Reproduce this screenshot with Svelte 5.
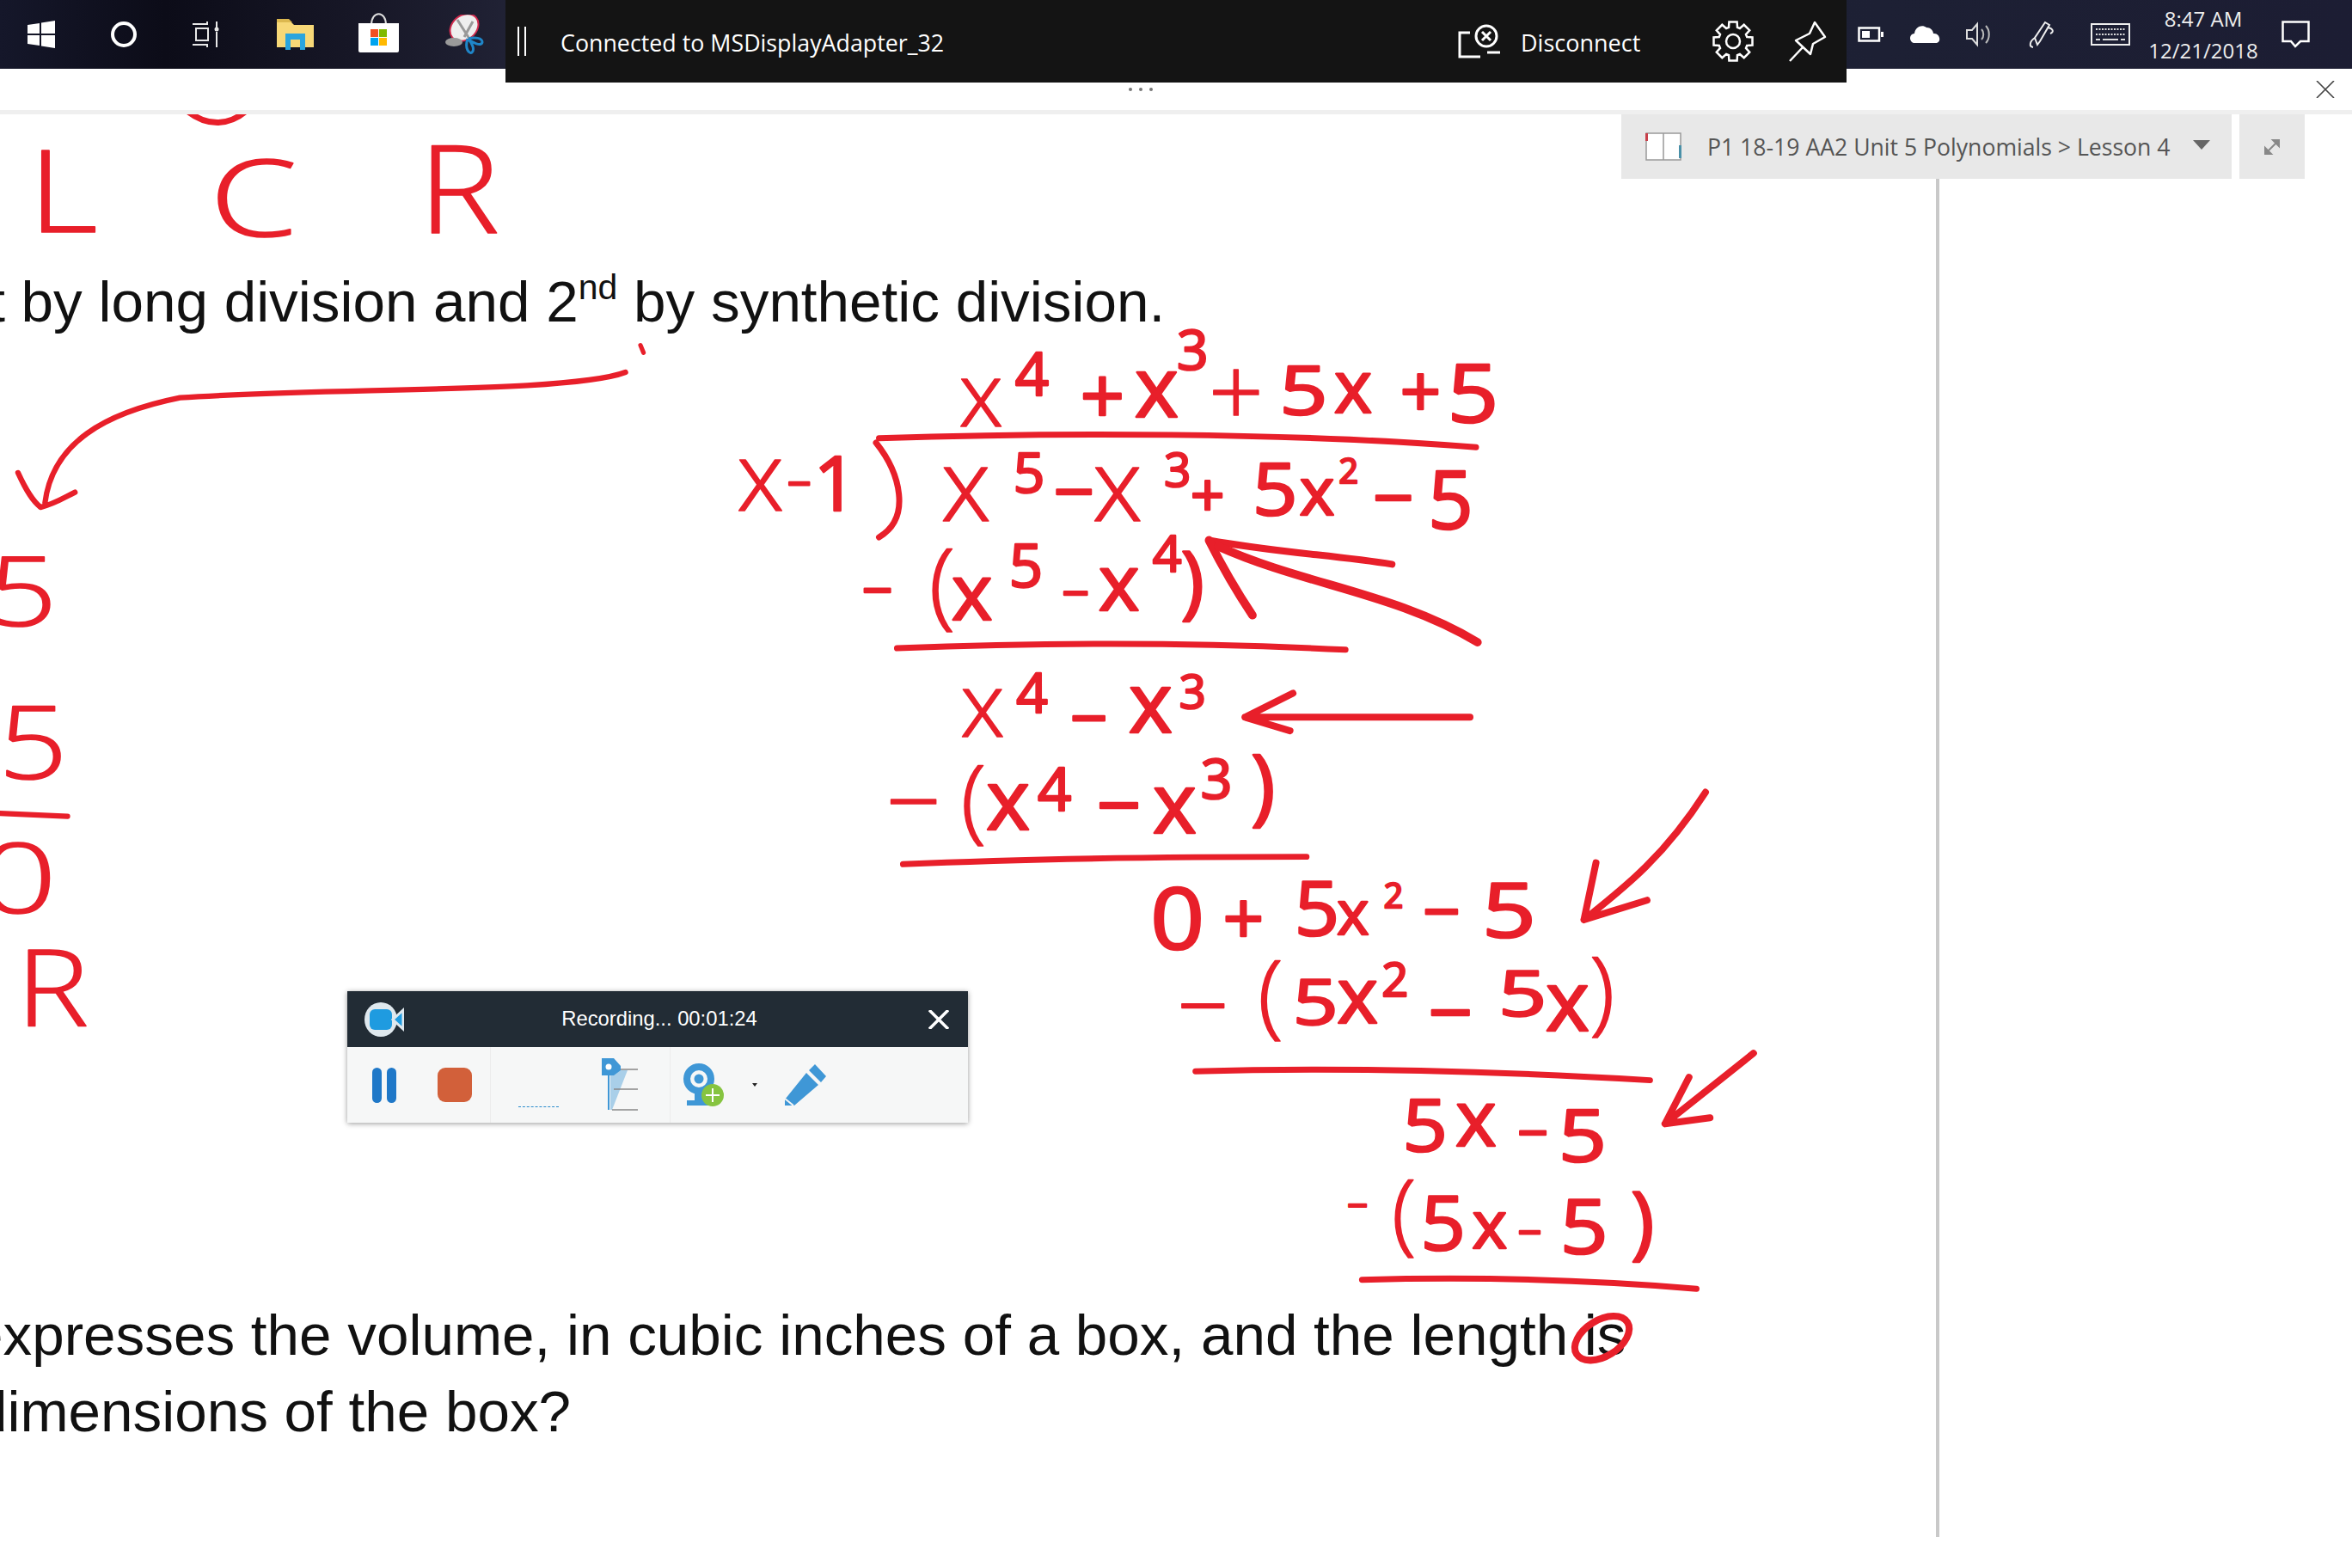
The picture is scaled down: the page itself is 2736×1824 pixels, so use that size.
<script>
  // handwritten ink, placed on the page in 1568x1045 units: [char, centre x, centre y, size, stretched width]
  const rows = [
    ["x",654,268,32],["4",688,249,28],["+",735,265,26],["x",771,263,30],["3",795,233,26],["+",824,263,32],["5",869,260,32,32],["x",902,262,26],["+",947,262,24],["5",982,262,38,34],
    ["x",507,323,34],["−",533,323,14],["1",557,322,36],
    ["x",644,329,36],["5",686,315,26],["−",716,329,24],["x",745,329,36],["3",785,313,22],["+",805,331,20],["5",850,326,34,30],["x",878,331,24],["2",899,314,16],["−",929,333,24],["5",967,333,38,30],
    ["−",585,394,18],["(",628,392,60],["x",648,399,28],["5",684,377,28],["−",717,396,16],["x",746,393,28],["4",778,369,24],[")",795,390,50],
    ["x",655,475,32],["4",688,462,26],["−",726,480,22],["x",767,473,30],["3",795,461,22],
    ["−",609,536,32],["(",649,536,58],["x",672,538,30],["4",703,526,28],["−",746,538,26],["x",783,540,30],["3",811,519,26],[")",842,527,52],
    ["0",785,612,40,36],["+",829,613,24],["5",878,605,36,30],["x",902,612,22],["2",929,597,16],["−",961,609,22],["5",1006,606,36,36],
    ["−",802,672,30],["(",847,666,58],["5",877,668,30,30],["x",905,668,28],["2",930,653,22],["−",967,676,26],["5",1015,662,30,32],["x",1045,672,30],[")",1068,664,58],
    ["5",950,750,34,30],["x",984,750,28],["−",1022,756,18],["5",1055,757,34,32],
    ["−",905,804,12],["(",936,812,56],["5",962,815,36,30],["x",993,820,24],["−",1020,822,14],["5",1056,817,36,32],[")",1095,817,50],
    ["L",42,127,54,46],["C",169,132,50,58],["R",306,126,58,54],
    ["5",15,394,46,46],["5",22,495,48,46],["0",12,585,46,52],["R",35,658,50,48]
  ];

  const metrics = {
    x: [0.54, 0.27],
    "+": [0.5, 0.33],
    "−": [0.5, 0.33],
    "(": [0.94, 0.29],
    ")": [0.94, 0.29]
  };

  const glyphs = rows.map(([c, x, y, size, w]) => {
    const [ratio, mid] = metrics[c] || [0.71, 0.36];
    const fs = size / ratio;
    return { c, x, y: y + mid * fs, fs, w, thin: fs > 58 };
  });

  const strokes = [
    // rules under each step
    ["M586 292C700 288 860 288 984 298", 4],
    ["M598 432C700 428 800 428 897 433", 4],
    ["M602 576C690 572 790 571 871 571", 4],
    ["M797 714C900 711 1000 714 1100 720", 4],
    ["M908 853C980 851 1060 853 1131 859", 4],
    ["M0 542L45 544", 3.6],
    // division bracket
    ["M584 295C600 315 608 345 586 358", 4],
    // arrows
    ["M806 360C850 368 890 370 928 376", 4.6],
    ["M806 360C815 378 825 395 835 410", 5.6],
    ["M812 364C870 390 930 395 985 428", 5.6],
    ["M980 478H830M862 462L830 478L860 487", 4.6],
    ["M1137 528C1110 570 1085 590 1056 613M1064 575L1056 613L1098 600", 4.6],
    ["M1169 702L1110 749M1126 718L1110 749L1140 745", 4.6],
    ["M417 248C380 262 220 258 120 265C70 275 35 295 30 335M12 315C18 328 22 334 27 338C36 336 42 332 50 328", 3.6],
    ["M427 230L429 235", 3],
    // arc cut off by the header
    ["M125 74C138 84 152 84 164 74", 4]
  ];

  // settings gear outline
  const gear = (() => {
    const pts = [];
    for (let i = 0; i < 8; i++) {
      const a = (i * Math.PI) / 4;
      [[-0.3, 17], [-0.2, 23], [0.2, 23], [0.3, 17]].forEach(([d, r]) => {
        pts.push(`${(25 + r * Math.cos(a + d)).toFixed(1)} ${(25 + r * Math.sin(a + d)).toFixed(1)}`);
      });
    }
    return "M" + pts.join("L") + "Z";
  })();
</script>

<div class="page">
  <div class="taskbar">
    <div class="tb-left">
      <svg class="win" width="32" height="32" viewBox="0 0 32 32"><path fill="#fff" d="M0 5L14 3V15H0ZM16 2.6L32 0V15H16ZM0 17H14V29L0 27ZM16 17H32V32L16 29.4Z"/></svg>
      <svg class="cortana" width="32" height="32" viewBox="0 0 32 32"><circle cx="16" cy="16" r="13" fill="none" stroke="#fff" stroke-width="4"/></svg>
      <svg class="taskview" width="34" height="32" viewBox="0 0 34 32"><path fill="none" stroke="#e8e8e8" stroke-width="2" d="M1 4H18V1M1 28H18V31M5 9H19V23H5ZM29 1V8M29 13V31"/><circle cx="29" cy="10" r="2.5" fill="#e8e8e8"/></svg>
      <svg class="folder" width="43" height="36" viewBox="0 0 43 36"><path fill="#f7d877" d="M0 3H16L20 7H43V33H0Z"/><path fill="#dcb84f" d="M0 0H14L18 4H0Z"/><path fill="#2aa5de" d="M10 17H33V36H27V24H16V36H10Z"/></svg>
      <svg class="store" width="47" height="46" viewBox="0 0 47 46"><path fill="none" stroke="#ddd" stroke-width="2" d="M15 14C15 -3 32 -3 32 14"/><path fill="#fff" d="M0 12H47V44Q47 46 45 46H2Q0 46 0 44Z"/><path fill="#f25022" d="M14 19H23V28H14Z"/><path fill="#7fba00" d="M24 19H33V28H24Z"/><path fill="#00a4ef" d="M14 29H23V38H14Z"/><path fill="#ffb900" d="M24 29H33V38H24Z"/></svg>
      <svg class="snip" width="45" height="46" viewBox="0 0 45 46"><ellipse cx="22" cy="15" rx="18" ry="14" transform="rotate(-40 22 15)" fill="#eee" stroke="#d02b4e" stroke-width="2"/><path stroke="#999" stroke-width="3" d="M14 6L28 28M32 8L22 26"/><ellipse cx="10" cy="32" rx="10" ry="5" fill="#9a9a9a"/><path fill="none" stroke="#1f86c8" stroke-width="3" d="M26 28C22 40 28 46 31 44C35 40 30 32 27 29C31 32 42 38 43 32C43 27 34 26 27 28"/></svg>
    </div>
    <div class="tray">
      <svg class="battery" width="30" height="18" viewBox="0 0 30 18"><path fill="none" stroke="#fff" stroke-width="2.5" d="M1.5 1.5H25V16.5H1.5Z"/><path fill="#fff" d="M5 5H14V13H5ZM27 6H30V12H27Z"/></svg>
      <svg class="cloud" width="35" height="22" viewBox="0 0 35 22"><path fill="#fff" d="M4 22C-2 20 -1 11 5 11C6 3 14 0 19 4C25 4 27 9 27 11C34 10 37 20 31 22Z"/></svg>
      <svg class="speaker" width="31" height="30" viewBox="0 0 31 30"><path fill="none" stroke="#ddd" stroke-width="2" d="M1 10H7L13 3V27L7 20H1Z"/><path fill="none" stroke="#bbb" stroke-width="2" d="M18 9C21 12 21 18 18 21M23 5C28 10 28 20 23 25"/></svg>
      <svg class="pen" width="32" height="32" viewBox="0 0 32 32"><path fill="none" stroke="#eee" stroke-width="2" d="M10 28L7 20L19 2L24 5L13 24ZM22 8C28 9 30 13 25 15M7 20C1 24 0 30 5 31"/></svg>
      <svg class="keys" width="46" height="26" viewBox="0 0 46 26"><rect x="1" y="1" width="44" height="24" fill="none" stroke="#eee" stroke-width="2"/><path stroke="#ddd" stroke-width="2" stroke-dasharray="2 1.5" d="M6 7H40M6 13H40"/><path stroke="#ddd" stroke-width="2" d="M6 19H11M14 19H32M35 19H40"/></svg>
      <div class="clock">
        <span>8:47 AM</span>
        <span>12/21/2018</span>
      </div>
      <svg class="action" width="33" height="32" viewBox="0 0 33 32"><path fill="none" stroke="#fff" stroke-width="2.5" d="M1.5 1.5H31.5V24H22L16 30L11 24H1.5Z"/></svg>
    </div>
  </div>

  <div class="connect">
    <span class="grip"></span>
    <span class="connect-label">Connected to MSDisplayAdapter_32</span>
    <svg class="disc-icon" width="50" height="40" viewBox="0 0 50 40"><g fill="none" stroke="#fff" stroke-width="3"><path d="M14 10H2V38H26M2 24V38M34 33H49"/><circle cx="33" cy="14" r="12"/><path d="M28 9L38 19M38 9L28 19"/></g></svg>
    <span class="disc-label">Disconnect</span>
    <svg class="gear" width="50" height="50" viewBox="0 0 50 50"><path d={gear} fill="none" stroke="#fff" stroke-width="2.5"/><circle cx="25" cy="25" r="8" fill="none" stroke="#fff" stroke-width="2.5"/></svg>
    <svg class="pin" width="48" height="48" viewBox="0 0 48 48"><path fill="none" stroke="#fff" stroke-width="2.5" stroke-linejoin="round" d="M1 47L17 30M8 23L25 39L28 27L42 19L30 2L24 15Z"/></svg>
  </div>

  <div class="app-head">
    <div class="dots"><i></i><i></i><i></i></div>
    <svg class="close" width="22" height="20" viewBox="0 0 22 20"><path stroke="#444" stroke-width="1.6" d="M1 0L21 20M21 0L1 20"/></svg>
  </div>

  <div class="canvas">
    <div class="notes">
      <p class="q1">1st by long division and 2<sup>nd</sup> by synthetic division.</p>
      <p class="q2">expresses the volume, in cubic inches of a box, and the length is</p>
      <p class="q3">dimensions of the box?</p>
    </div>
    <div class="side"></div>

    <div class="toolbar">
      <div class="crumb">
        <svg width="42" height="33" viewBox="0 0 42 33"><path fill="#fff" stroke="#999" stroke-width="1.5" d="M1 1H41V32H1ZM21 1V32"/><path fill="#c8404a" d="M0 1H3V10H0Z"/><path fill="#4a90a8" d="M39 15H42V30H39Z"/></svg>
        <span>P1 18-19 AA2 Unit 5 Polynomials &gt; Lesson 4</span>
        <div class="caret"></div>
      </div>
      <div class="expand">
        <svg width="22" height="22" viewBox="0 0 22 22"><path stroke="#888" stroke-width="2" fill="#888" d="M3 19L19 3M12 3H19V10ZM3 12V19H10Z"/></svg>
      </div>
    </div>
  </div>

  <svg class="ink" width="2736" height="1824" viewBox="0 0 1568 1045">
    {#each strokes as [d, w]}
      <path {d} stroke-width={w} class="ink-line" />
    {/each}
    <ellipse cx="1068" cy="892" rx="20" ry="12" transform="rotate(-32 1068 892)" stroke-width="4.6" class="ink-line" />
    {#each glyphs as g}
      <text x={g.x} y={g.y} font-size={g.fs} textLength={g.w} lengthAdjust={g.w ? "spacingAndGlyphs" : undefined} class="ink-text" class:thin={g.thin}>{g.c}</text>
    {/each}
  </svg>

  <div class="recorder">
    <div class="rec-title">
      <svg width="46" height="40" viewBox="0 0 46 40"><ellipse cx="19" cy="20" rx="19" ry="20" fill="#dfe8ee"/><rect x="6" y="8" width="26" height="24" rx="6" fill="#1f9be0"/><path fill="#1f9be0" stroke="#dfe8ee" stroke-width="3" d="M33 20L45 9V31Z"/></svg>
      <span>Recording... 00:01:24</span>
      <svg width="24" height="22" viewBox="0 0 24 22"><path stroke="#fff" stroke-width="3.5" d="M1 0L23 22M23 0L1 22"/></svg>
    </div>
    <div class="rec-body">
      <div class="rec-group first">
        <div class="pause"><i></i><i></i></div>
        <div class="stop"></div>
      </div>
      <div class="rec-group second">
        <div class="level"></div>
        <svg width="44" height="62" viewBox="0 0 44 62"><path fill="#a9cfe9" d="M10 14H30L12 60H10Z"/><path fill="#3f97d6" d="M0 0H14L22 9V14L14 20H9V60H7V20H0Z"/><circle cx="8" cy="10" r="3.5" fill="#fff"/><path stroke="#888" stroke-width="1.5" d="M22 13H42M14 36H42M12 60H42"/></svg>
      </div>
      <div class="rec-group third">
        <svg width="50" height="50" viewBox="0 0 50 50"><circle cx="19" cy="18" r="14" fill="none" stroke="#3f97d6" stroke-width="8"/><circle cx="19" cy="18" r="5.5" fill="#3f97d6"/><path fill="#3f97d6" d="M14 32H24V43H32V49H5V43H14Z"/><circle cx="35" cy="37" r="13" fill="#86c440"/><path stroke="#fff" stroke-width="2" d="M35 29V45M27 37H43"/></svg>
        <div class="mini-caret"></div>
        <svg width="48" height="48" viewBox="0 0 48 48"><path fill="#3f97d6" d="M35 0L48 14L42 21L28 7ZM25 10L39 24L11 48H0V41Z"/><path stroke="#f6f7f7" stroke-width="2" d="M0 40L10 48"/></svg>
      </div>
    </div>
  </div>
</div>

<style>
  :global(body) {
    margin: 0;
  }

  .page {
    position: relative;
    width: 2736px;
    height: 1824px;
    overflow: hidden;
    background: #fff;
    display: flex;
    flex-direction: column;
    font-family: "Open Sans", sans-serif;
  }

  svg {
    display: block;
    flex: none;
  }

  /* windows taskbar */
  .taskbar {
    height: 80px;
    flex: none;
    display: flex;
    justify-content: space-between;
    align-items: center;
    background: linear-gradient(90deg, #15172a, #0c0c18 7%, #181828 16%, #24263a 24%, #1d2034 80%, #1c1d33);
    position: relative;
    z-index: 2;
  }

  .tb-left {
    display: flex;
    align-items: center;
    padding-left: 32px;
  }

  .cortana {
    margin-left: 64px;
  }

  .taskview {
    margin-left: 63px;
  }

  .folder {
    margin-left: 65px;
  }

  .store {
    margin-left: 52px;
    margin-top: -4px;
  }

  .snip {
    margin-left: 54px;
  }

  .tray {
    display: flex;
    align-items: center;
    padding-right: 49px;
  }

  .battery {
    margin-right: 31px;
  }

  .cloud {
    margin-right: 30px;
    margin-top: -2px;
  }

  .speaker {
    margin-right: 42px;
  }

  .pen {
    margin-right: 40px;
  }

  .keys {
    margin-right: 26px;
  }

  .clock {
    width: 118px;
    margin-right: 32px;
    display: flex;
    flex-direction: column;
    align-items: center;
    gap: 12px;
    color: #eee;
    font-size: 24px;
    line-height: 25px;
  }

  /* remote connection bar, drops over the taskbar */
  .connect {
    position: absolute;
    top: 0;
    left: 588px;
    width: 1560px;
    height: 96px;
    background: #141414;
    display: flex;
    align-items: center;
    color: #fff;
    z-index: 3;
    font-size: 27px;
  }

  .grip {
    width: 6px;
    height: 34px;
    margin-left: 14px;
    border-left: 2px solid #fff;
    border-right: 2px solid #fff;
  }

  .connect-label {
    width: 1044px;
    margin-left: 40px;
    margin-top: 2px;
    font-size: 26.8px;
    white-space: nowrap;
  }

  .disc-label {
    margin-left: 23px;
    width: 222px;
    margin-top: 2px;
  }

  .pin {
    margin-left: 40px;
  }

  .app-head {
    height: 48px;
    flex: none;
    background: #fff;
    border-bottom: 5px solid #efefef;
    position: relative;
    z-index: 2;
    display: flex;
    justify-content: flex-end;
    align-items: center;
    padding-right: 20px;
  }

  .dots {
    position: absolute;
    left: 1313px;
    top: 22px;
    display: flex;
    gap: 8px;
  }

  .dots i {
    width: 4px;
    height: 4px;
    border-radius: 50%;
    background: #777;
  }

  /* page */
  .canvas {
    flex: 1;
    position: relative;
    display: flex;
    margin-bottom: 36px;
  }

  .notes {
    width: 2252px;
    color: #111;
    font-family: "Liberation Sans", Arial, sans-serif;
    font-size: 67.4px;
    line-height: 89px;
    white-space: nowrap;
  }

  .notes p {
    margin: 0;
  }

  .notes sup {
    font-size: 41px;
    line-height: 0;
    vertical-align: 26px;
  }

  .q1 {
    padding-top: 173px;
    margin-left: -84px !important;
  }

  .q2 {
    padding-top: 1113px;
    margin-left: -34px !important;
  }

  .q3 {
    margin-left: -29px !important;
  }

  .side {
    width: 4px;
    background: #c9c9c9;
  }

  .toolbar {
    position: absolute;
    top: 0;
    right: 55px;
    display: flex;
    gap: 9px;
    height: 75px;
    z-index: 2;
  }

  .crumb {
    width: 710px;
    box-sizing: border-box;
    background: #e8e8e8;
    display: flex;
    align-items: center;
    padding-left: 28px;
    color: #555;
    font-size: 26.6px;
  }

  .crumb span {
    margin-left: 30px;
    white-space: nowrap;
  }

  .caret {
    margin-left: 26px;
    border-left: 10px solid transparent;
    border-right: 10px solid transparent;
    border-top: 11px solid #666;
    margin-top: -4px;
  }

  .expand {
    width: 76px;
    background: #e8e8e8;
    display: flex;
    align-items: center;
    justify-content: center;
  }

  /* handwriting layer */
  .ink {
    position: absolute;
    left: 0;
    top: 0;
    z-index: 1;
  }

  .ink-line {
    fill: none;
    stroke: #e81f2a;
    stroke-linecap: round;
    stroke-linejoin: round;
  }

  .ink-text {
    font-family: "Open Sans", sans-serif;
    text-anchor: middle;
    fill: #e81f2a;
    stroke: #e81f2a;
    stroke-width: 1.5;
    stroke-linejoin: round;
  }

  .ink-text.thin {
    font-weight: 300;
    stroke-width: 1;
  }

  /* screen recorder window */
  .recorder {
    position: absolute;
    left: 404px;
    top: 1153px;
    width: 722px;
    z-index: 4;
    box-shadow: 0 1px 6px rgba(0, 0, 0, 0.4);
    font-family: "Liberation Sans", Arial, sans-serif;
  }

  .rec-title {
    height: 65px;
    background: #222c35;
    display: flex;
    align-items: center;
    justify-content: space-between;
    padding: 0 22px 0 20px;
    color: #fff;
    font-size: 23.8px;
  }

  .rec-title span {
    margin-left: -16px;
    margin-top: -2px;
  }

  .rec-body {
    height: 88px;
    background: #f6f7f7;
    display: flex;
  }

  .rec-group {
    display: flex;
    align-items: center;
    border-right: 1px solid #ececec;
  }

  .first {
    width: 167px;
    padding-left: 29px;
    box-sizing: border-box;
    gap: 48px;
  }

  .pause {
    display: flex;
    gap: 6px;
  }

  .pause i {
    width: 11px;
    height: 41px;
    border-radius: 6px;
    background: #1f78c8;
  }

  .stop {
    width: 40px;
    height: 40px;
    border-radius: 9px;
    background: #d2603a;
  }

  .second {
    width: 209px;
    padding-left: 32px;
    box-sizing: border-box;
    gap: 50px;
  }

  .level {
    width: 47px;
    border-top: 1px dashed #2a8ccc;
    margin-top: 50px;
  }

  .third {
    border: none;
    padding-left: 14px;
  }

  .mini-caret {
    margin-left: 31px;
    border-left: 3px solid transparent;
    border-right: 3px solid transparent;
    border-top: 4px solid #222;
  }

  .third svg:last-child {
    margin-left: 32px;
  }
</style>
